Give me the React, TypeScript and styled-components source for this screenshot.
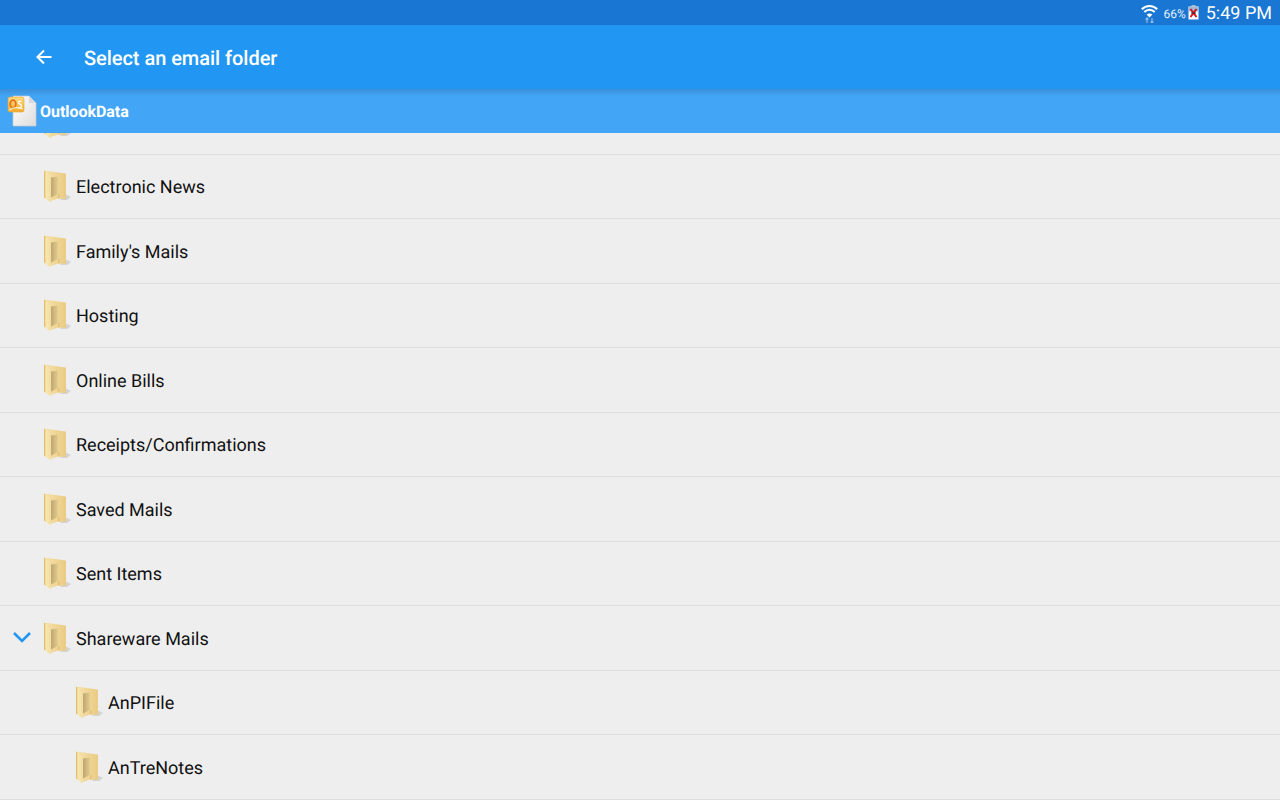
import React from "react";
import styled, { createGlobalStyle } from "styled-components";

const GlobalStyle = createGlobalStyle`
    html, body {
        margin: 0;
        padding: 0;
        background: #eeeeee;
    }
    body {
        font-family: Roboto, "Liberation Sans", sans-serif;
        text-rendering: geometricPrecision;
    }
`;

const Page = styled.div`
    width: 1280px;
    height: 800px;
    overflow: hidden;
    display: flex;
    flex-direction: column;
    background: #eeeeee;
`;

const Header = styled.header`
    position: relative;
    z-index: 2;
    flex: none;
`;

const StatusBar = styled.div`
    height: 25px;
    background: #1976d2;
    display: flex;
    align-items: center;
    justify-content: flex-end;
    padding-right: 8px;
    color: #fff;
`;

const Percent = styled.span`
    font-size: 12px;
    margin: 2px 2px 0 5px;
    color: #e8f1fb;
`;

const Clock = styled.span`
    font-size: 18px;
    margin: 2px 0 0 7px;
`;

const Toolbar = styled.div`
    height: 64px;
    background: #2196f3;
    display: flex;
    align-items: center;
    padding-left: 34px;
    gap: 30px;
    color: #fff;
`;

const Title = styled.h1`
    margin: 0;
    font-size: 20px;
    font-weight: 500;
    letter-spacing: -0.04px;
    position: relative;
    top: 1px;
`;

const PathBar = styled.div`
    height: 44px;
    background: linear-gradient(#3a8fd8 0, #42a5f5 7px);
    display: flex;
    align-items: center;
    padding-left: 7px;
    gap: 3px;
    color: #fff;
    font-size: 16px;
    font-weight: 700;
`;

const PathName = styled.span`
    margin-top: 1px;
    letter-spacing: -0.04px;
`;

const List = styled.ul`
    list-style: none;
    margin: -43px 0 0;
    padding: 0;
`;

const Row = styled.li<{ $depth: number }>`
    height: 63.5px;
    border-bottom: 1px solid #dddddd;
    display: flex;
    align-items: center;
    padding-left: ${(p) => 43 + p.$depth * 32}px;
    position: relative;
    font-size: 18px;
    color: #111111;
`;

const Label = styled.span`
    margin: 3px 0 0 5px;
`;

const FolderWrap = styled.span`
    display: flex;
    margin-top: 1px;
`;

const Chevron = styled.svg`
    position: absolute;
    left: 12px;
    top: 25px;
`;

function WifiIcon() {
    return (
        <svg width="17" height="20" viewBox="0 0 17 20">
            <path d="M.8 6.200C5 1.800 12 1.800 16.200 6.200" fill="none" stroke="#fff" strokeWidth="2" />
            <path d="M3.300 9C6.200 6 10.800 6 13.700 9" fill="none" stroke="#fff" strokeWidth="2" />
            <path d="M5.600 11.500C7.200 10 9.800 10 11.400 11.500L8.500 14.500Z" fill="#fff" />
            <path d="M6 15v5M4.600 16.500L6 15l1.400 1.500M11 20v-5M9.600 18.500L11 20l1.400-1.500" fill="none" stroke="#8fbdea" strokeWidth="1.200" />
        </svg>
    );
}

function BatteryIcon() {
    return (
        <svg width="11" height="15" viewBox="0 0 11 15">
            <rect x="3.500" y="0" width="4" height="2" fill="#9db8d4" />
            <rect x="0.500" y="1.500" width="10" height="13" fill="#fff" />
            <rect x="0.500" y="1.500" width="10" height="5" fill="#9db8d4" />
            <path d="M2.500 4l6 8M8.500 4l-6 8" stroke="#d3141a" strokeWidth="2" />
            <path d="M3 8h5" stroke="#222" strokeWidth="1" />
        </svg>
    );
}

function BackIcon() {
    return (
        <svg width="20" height="20" viewBox="0 0 20 20">
            <path d="M17.500 10H3.500M10 3.500L3.500 10l6.500 6.500" fill="none" stroke="#fff" strokeWidth="2" />
        </svg>
    );
}

function OutlookFileIcon() {
    return (
        <svg width="30" height="32" viewBox="0 0 30 32">
            <defs>
                <linearGradient id="sheet" x1="0" y1="0" x2="1" y2="1">
                    <stop offset="0" stopColor="#ffffff" />
                    <stop offset="1" stopColor="#dcdcdc" />
                </linearGradient>
                <linearGradient id="badge" x1="0" y1="0" x2="0" y2="1">
                    <stop offset="0" stopColor="#fcdc80" />
                    <stop offset="1" stopColor="#f2ab2c" />
                </linearGradient>
            </defs>
            <path d="M6 1H22L29 8V31H6Z" fill="url(#sheet)" stroke="#c4c8cc" strokeWidth="0.7" />
            <path d="M22 1V8H29Z" fill="#d5d8dc" />
            <rect x="1" y="2" width="16" height="15" rx="2" fill="url(#badge)" stroke="#e0a43a" strokeWidth="0.6" />
            <ellipse cx="6" cy="9" rx="2.800" ry="3.800" fill="none" stroke="#e2701e" strokeWidth="1.700" />
            <path d="M14.500 6.500c-2-1-3.500 0-3 1.500s3 1 3 3-2 2.500-4 1.500" fill="none" stroke="#fff" strokeWidth="1.300" />
            <path d="M2 15c4-3 9-3 14-1" fill="none" stroke="#fbeecb" strokeWidth="1.200" />
        </svg>
    );
}

function FolderIcon() {
    return (
        <svg width="28" height="33" viewBox="0 0 28 33">
            <defs>
                <linearGradient id="folderBack" x1="0" y1="0" x2="1" y2="0">
                    <stop offset="0" stopColor="#f6e2ab" />
                    <stop offset="1" stopColor="#eacb84" />
                </linearGradient>
                <linearGradient id="folderFront" x1="0" y1="0" x2="1" y2="0">
                    <stop offset="0" stopColor="#dcb455" />
                    <stop offset="0.3" stopColor="#f8e7b4" />
                    <stop offset="1" stopColor="#f2dba0" />
                </linearGradient>
                <linearGradient id="folderBand" x1="0" y1="0" x2="1" y2="0">
                    <stop offset="0" stopColor="#bfa76e" />
                    <stop offset="1" stopColor="#e2cc92" />
                </linearGradient>
            </defs>
            <path d="M22 24l6 3-4 3h-7z" fill="#c8c8c8" opacity="0.7" />
            <path d="M1 .500L23 3.500V29L15 28.500L8 31Z" fill="url(#folderBack)" />
            <path d="M8 7.500L15 6.500V24L8 27.500Z" fill="url(#folderBand)" />
            <path d="M15 24h1.500V28.500H15Z" fill="#e2c27a" />
            <path d="M1 .500L8 5.500V28L7.500 32.500L1 27.500Z" fill="url(#folderFront)" />
        </svg>
    );
}

const folders = [
    { name: "", depth: 0 },
    { name: "Electronic News", depth: 0 },
    { name: "Family's Mails", depth: 0 },
    { name: "Hosting", depth: 0 },
    { name: "Online Bills", depth: 0 },
    { name: "Receipts/Confirmations", depth: 0 },
    { name: "Saved Mails", depth: 0 },
    { name: "Sent Items", depth: 0 },
    { name: "Shareware Mails", depth: 0, open: true },
    { name: "AnPIFile", depth: 1 },
    { name: "AnTreNotes", depth: 1 },
];

export default function App() {
    return (
        <Page>
            <GlobalStyle />
            <Header>
                <StatusBar>
                    <WifiIcon />
                    <Percent>66%</Percent>
                    <BatteryIcon />
                    <Clock>5:49 PM</Clock>
                </StatusBar>
                <Toolbar>
                    <BackIcon />
                    <Title>Select an email folder</Title>
                </Toolbar>
                <PathBar>
                    <OutlookFileIcon />
                    <PathName>OutlookData</PathName>
                </PathBar>
            </Header>
            <List>
                {folders.map((f, i) => (
                    <Row key={i} $depth={f.depth}>
                        {f.open && (
                            <Chevron width="20" height="12" viewBox="0 0 20 12">
                                <path d="M2 2l8 8 8-8" fill="none" stroke="#2196f3" strokeWidth="2.600" />
                            </Chevron>
                        )}
                        <FolderWrap>
                            <FolderIcon />
                        </FolderWrap>
                        <Label>{f.name}</Label>
                    </Row>
                ))}
            </List>
        </Page>
    );
}
